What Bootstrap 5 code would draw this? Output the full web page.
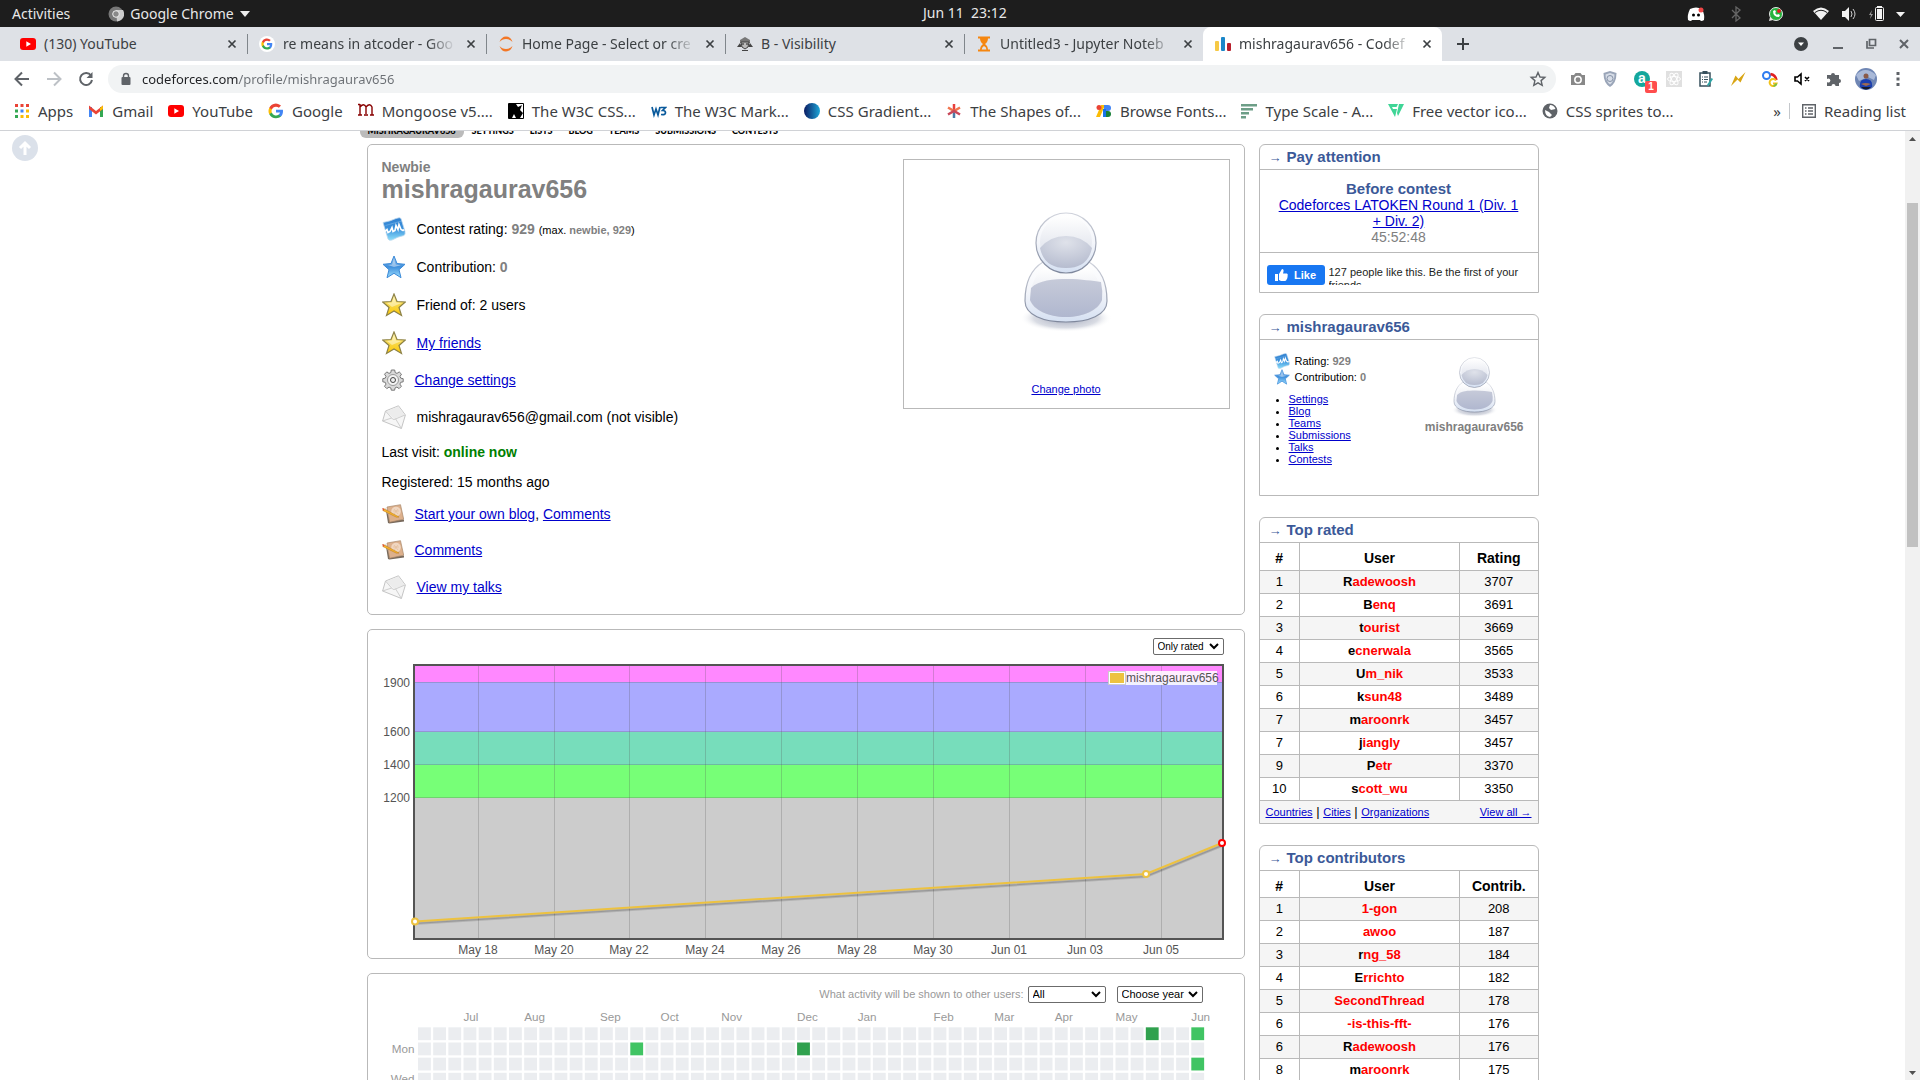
<!DOCTYPE html>
<html lang="en">
<head>
<meta charset="utf-8">
<meta name="viewport" content="width=device-width, initial-scale=1">
<title>mishragaurav656 - Codeforces</title>
<link href="https://cdn.jsdelivr.net/npm/bootstrap@5.3.0/dist/css/bootstrap.min.css" rel="stylesheet">
<style>
:root{--line:#b9b9b9;--cf:#3b5998;--shell:"Noto Sans","Open Sans",sans-serif}
body{height:100vh;overflow:hidden;background:#fff;color:#000;font:14px/16px "Liberation Sans",Arial,sans-serif}
svg{flex-shrink:0}
.page a{color:#0000cc;text-decoration:underline;text-underline-offset:1px}
/* desktop bar */
.desk{height:27px;background:#1d1d1d;color:#e8e8e8;font:14px/26px var(--shell)}
.appname{margin-left:38px;gap:6px}
/* tabs */
.tabstrip{height:34px;background:#dee1e6;color:#3c4043;font:14px/34px var(--shell);padding-left:8px}
.tabitem{width:239px;padding:0 8px 0 12px;gap:8px;position:relative}
.tabitem .ttl{flex:1;min-width:0;overflow:hidden;white-space:nowrap}
.tabitem .fade-end{-webkit-mask-image:linear-gradient(90deg,#000 84%,transparent)}
.tabitem+.tabitem:not(.on)::before{content:"";position:absolute;left:0;top:7px;height:20px;width:1px;background:#80868b}
.tabitem.on{background:#fff;border-radius:8px 8px 0 0}
.plain{border:0;background:none;padding:0;color:inherit;display:inline-flex;align-items:center;justify-content:center}
.xbtn{width:14px;height:14px}
.winbtn{width:33px;height:34px;color:#5f6368}
/* toolbar */
.tools{height:36px;padding:0 6px}
.tool{width:32px;height:28px;color:#5f6368;position:relative}
.omni{height:28px;border-radius:14px;background:#f1f3f4;margin:0 6px;padding:0 9px 0 11px;gap:9px}
.omni input{border:0;outline:0;padding:0;flex:1;min-width:0;font:13px/28px var(--shell);color:transparent;background:linear-gradient(90deg,#202124 97px,#6b6f74 97px);-webkit-background-clip:text;background-clip:text}
.cnt{left:19px;top:16px;width:12px;height:12px;border-radius:2px;background:#ff4d4d;color:#fff;font:bold 10px/12px "Liberation Sans",sans-serif;text-align:center}
.marks{height:34px;padding:0 14px 5px;border-bottom:1px solid #d0d2d6;font:15px/28px var(--shell);color:#3c4043}
.marks a{color:inherit;text-decoration:none;white-space:nowrap;display:flex;align-items:center;gap:8px;margin-right:15px}
.marks a.last-mark{margin:0;padding-left:12px;border-left:1px solid #c4c7cb;height:16px}
/* page */
.bodyview{flex:1;min-height:0;overflow:hidden;position:relative}
.totop{left:12px;top:4px}
.wrapper{width:1172px;max-width:100%}
.submenu{height:7px;margin:0 0 6px -7px;overflow:hidden;font:900 9px/12px Lato,sans-serif}
.submenu a{color:#000;text-decoration:none;padding:0 8px 1px}
.submenu a.cur{background:#bbb;border-radius:0 0 6px 6px}
.cols{gap:14px}
.sidecol{width:280px}
.rbox{border:1px solid var(--line);border-radius:5px;margin-bottom:14px}
.sbox{border:1px solid var(--line);border-radius:6px 6px 0 0;margin-bottom:21px}
.cap{height:25px;padding:0 9px;border-bottom:1px solid var(--line);color:var(--cf);font-weight:bold;font-size:15px;line-height:23px}
.cap span{font-size:13px;font-weight:400;margin-right:5px}
.profile{padding:14px 14px 8px}
.gr{color:gray}
.online{color:#008000}
.handle{font-size:25px;line-height:28px;font-weight:bold}
.facts{margin:7px 0 0;padding:0;list-style:none}
.facts li{display:flex;align-items:center;height:38px;gap:11px}
.facts li.mid{height:36px}
.facts li.visit{height:32px}
.facts li.reg{height:28px}
.tiny{font-size:11px}
.photo{width:327px;height:250px;border:1px solid var(--line);padding:52px 0 11px}
.chartbox{padding:8px 20px 0 15px}
.chartbox svg,.actbox svg{overflow:visible}
.cfsel{appearance:none;border:1px solid #6b6b6b;border-radius:2px;height:17px;padding:0 16px 0 4px;font-size:11px;line-height:15px;color:#000;background:#fff url("data:image/svg+xml,%3Csvg xmlns='http://www.w3.org/2000/svg' width='10' height='7'%3E%3Cpath d='M1 1l4 4 4-4' fill='none' stroke='%23000' stroke-width='2'/%3E%3C/svg%3E") no-repeat right 4px center}
.selrate{font-size:10px;width:71px}
.selwho{width:78px}
.selyear{width:86px}
.actbox{padding:12px 20px 0 15px}
.acthead{height:18px;padding-right:21px}
.selyear{margin-left:11px}
.actlab{color:#999;font-size:11px}
.nextc{padding:11px 16px 7px;line-height:16px}
.nextc b{color:var(--cf);font-size:15px}
.likebar{border-top:1px solid var(--line);padding:12px 7px 7px;gap:4px}
.likebtn{width:58px;height:20px;border-radius:3px;background:#1877f2;color:#fff;font-weight:bold;font-size:11px;gap:5px}
.liketext{font-size:11px;line-height:13px;height:20px;padding-top:1px;overflow:hidden;color:#1c1e21}
.mebox{height:155px;padding:13px 14px 0 14px}
.mebox svg{margin-right:5px}
.me-name{font-size:12px}
.links{margin:8px 0 0;padding-left:15px;font-size:11px;line-height:12px}
.rank{width:100%;border-collapse:collapse;text-align:center;table-layout:fixed}
.rank th{height:27px;font-size:14px;padding:4px 0 0;border-bottom:1px solid var(--line)}
.rank th:first-child{width:40px}
.rank th:last-child{width:78px}
.rank td{height:23px;font-size:13px;line-height:16px;padding:0;border-bottom:1px solid var(--line)}
.rank th+th,.rank td+td{border-left:1px solid var(--line)}
.rank tbody tr:nth-child(odd){background:#f5f5f5}
.rank td b{color:red}
.rank td b i{font-style:normal;color:#000}
.foot{background:#f5f5f5;height:22px;padding:0 6px;font-size:13px}
.foot a{font-size:11px}
.sbar{width:15px;background:#f1f1f1}
.thumb{width:11px;height:344px;background:#c1c1c1;margin-top:57px}
</style>
<script src="https://cdn.jsdelivr.net/npm/bootstrap@5.3.0/dist/js/bootstrap.bundle.min.js"></script>
</head>
<body class="d-flex flex-column">
<svg width="0" height="0" class="position-absolute" aria-hidden="true">
<defs>
<linearGradient id="gBlue" x1="0" y1="0" x2="0" y2="1"><stop offset="0" stop-color="#2f7fd0"/><stop offset=".5" stop-color="#3d93dd"/><stop offset="1" stop-color="#8fe0fa"/></linearGradient>
<linearGradient id="gStarB" x1="0" y1="0" x2="0" y2="1"><stop offset="0" stop-color="#a9cdf0"/><stop offset=".5" stop-color="#3f8fdc"/><stop offset="1" stop-color="#9fe0ff"/></linearGradient>
<linearGradient id="gStarY" x1="0" y1="0" x2="0" y2="1"><stop offset="0" stop-color="#fff3b0"/><stop offset=".5" stop-color="#f7d84a"/><stop offset="1" stop-color="#ffc800"/></linearGradient>
<linearGradient id="gHead" x1="0" y1="0" x2="0" y2="1"><stop offset="0" stop-color="#fff"/><stop offset=".5" stop-color="#f3f5fa"/><stop offset="1" stop-color="#d5e0f2"/></linearGradient>
<linearGradient id="gGlass" x1="0" y1="0" x2="0" y2="1"><stop offset="0" stop-color="#fff"/><stop offset="1" stop-color="#d3d8e5"/></linearGradient>
<radialGradient id="gFace" cx=".5" cy=".2" r=".8"><stop offset="0" stop-color="#dfe2ea"/><stop offset="1" stop-color="#b6bccf"/></radialGradient>
<linearGradient id="gIn" x1="0" y1="0" x2="0" y2="1"><stop offset="0" stop-color="#c6cad9"/><stop offset="1" stop-color="#b0b7cf"/></linearGradient>
<linearGradient id="gEdge" x1="0" y1="0" x2="0" y2="1"><stop offset="0" stop-color="#d0d3dc"/><stop offset="1" stop-color="#7e879c"/></linearGradient>
<linearGradient id="gCss"><stop offset="0" stop-color="#0b1b63"/><stop offset="1" stop-color="#1ea7d8"/></linearGradient>
<radialGradient id="gSh"><stop offset="0" stop-color="#9aa0b4"/><stop offset=".7" stop-color="#c9cdd8" stop-opacity=".7"/><stop offset="1" stop-color="#fff" stop-opacity="0"/></radialGradient>
<symbol id="yt" viewBox="0 0 16 16"><rect y="2" width="16" height="12" rx="3" fill="#f00"/><path d="M6.300 5.200v5.600L11 8z" fill="#fff"/></symbol>
<symbol id="goog" viewBox="0 0 16 16"><path d="M15 8.200c0-.6 0-1-.1-1.400H8v2.700h4a3.500 3.500 0 0 1-1.500 2.200v1.900h2.500c1.300-1.300 2-3.200 2-5.400z" fill="#4285f4"/><path d="M8 15.300c2 0 3.700-.7 5-1.700l-2.500-1.900a4.500 4.500 0 0 1-6.700-2.300H1.300v1.900A7.400 7.400 0 0 0 8 15.300z" fill="#34a853"/><path d="M3.800 9.400a4.400 4.400 0 0 1 0-2.800V4.700H1.300a7.400 7.400 0 0 0 0 6.600z" fill="#fbbc05"/><path d="M8 3.700c1.100 0 2.100.4 2.900 1.100L13 2.600A7.400 7.400 0 0 0 1.300 4.700l2.500 1.900A4.500 4.500 0 0 1 8 3.700z" fill="#ea4335"/></symbol>
<symbol id="x" viewBox="0 0 14 14"><path d="M3.500 3.500l7 7m0-7l-7 7" stroke="#3c4043" stroke-width="1.700"/></symbol>
<symbol id="chart" viewBox="0 0 24 24"><path d="M1 5.500Q9 4 14 1.500q4-1.500 5 0l4 13q.6 3-1 4-6 1-12 4.500-3 1-4-1z" fill="url(#gBlue)" stroke="#bcd8ee" stroke-width=".8"/><path d="M3 14.500l2-2 1 3 2-1 2-4 1 4 2-1 1-5 2 4 1-5 2 5 2 1 1-1" fill="none" stroke="#fff" stroke-width="1.600"/><path d="M3.500 8.500l16-4.500" stroke="#7bb7e8" stroke-width=".6"/></symbol>
<symbol id="starB" viewBox="0 0 24 24"><path d="M12 1l3 7.500 8 .8-6 5.400 2 8-7-4.400-7 4.400 2-8-6-5.400 8-.8z" fill="url(#gStarB)" stroke="#3b8ad8" stroke-width="1"/><path d="M12 4l1.800 5.500 5 .7L12 12l-6-2 4-.6z" fill="#c9def3" opacity=".6"/></symbol>
<symbol id="starY" viewBox="0 0 24 24"><path d="M12 1l3 7.500 8.300.5-6.300 5.500 2.500 8L12 18l-7.500 4.500 2.500-8L.7 9 9 8.500z" fill="url(#gStarY)" stroke="#8d8247" stroke-width="1.200"/><path d="M12 3.500l2 6 5.500.5L10 14l-5-4 5-.5z" fill="#fffadb" opacity=".55"/></symbol>
<symbol id="gear" viewBox="0 0 22 22"><g fill="#d9d9d9" stroke="#777"><path d="M9.300 1h3.400l.5 2.600 1.800.8 2.200-1.500 2.300 2.300L18 7.400l.8 1.800 2.400.5v3.100l-2.500.5-.8 1.800 1.500 2.200-2.300 2.300-2.200-1.500-1.800.8-.5 2.300H9.300l-.5-2.300-1.800-.8-2.200 1.500-2.300-2.300L4 15.100l-.8-1.800L.8 12.800V9.700l2.400-.5L4 7.400 2.500 5.200l2.300-2.300L7 4.400l1.800-.8z"/><circle cx="11" cy="11" r="5.500" fill="#f3f3f3" stroke="#999"/><circle cx="11" cy="11" r="2.500" fill="#eee" stroke="#444"/></g></symbol>
<symbol id="mail" viewBox="0 0 24 24"><path d="M3.500 6L16.500 .8 23.400 10l-4 13.500L.6 16z" fill="#f6f6f6" stroke="#bdbdbd" stroke-width=".9"/><path d="M4 6.500L16.300 1.500 23 10l-11 3.500z" fill="#ececec"/><path d="M3.500 6l7 8q1.500 1 3 0L23 10M.6 16l9-3m9.800 10.500l-6-10" fill="none" stroke="#c9c9c9" stroke-width=".9"/></symbol>
<symbol id="blog" viewBox="0 0 22 20"><path d="M3.500 3.500L6 19l1.500.5L22 17.500v-2L8 16z" fill="#77695c"/><path d="M5 3L18.500.7l3.200 14.500L7.500 18.300z" fill="#ddb08c" stroke="#a88768" stroke-width=".7"/><circle cx="14" cy="7.500" r="4.800" fill="#f6e3d2" opacity=".75"/><path d="M12 5l4 5m0-5l-4 5m-1-3h6" stroke="#e2bd9c" stroke-width=".7"/><path d="M1.500 4.500L17 13l-2.500.2L.8 6.500z" fill="#f9b42d" stroke="#b87a16" stroke-width=".5"/><path d="M0 4l2.500 1L1.500 7z" fill="#e0503a"/></symbol>
<symbol id="person" viewBox="0 0 100 124"><ellipse cx="50" cy="106" rx="46" ry="14" fill="url(#gSh)"/><path d="M27 50C14 58 9 73 9 89c0 14 18 21 41 21s41-7 41-21c0-16-5-31-18-39z" fill="url(#gHead)" stroke="url(#gEdge)" stroke-width="1.200"/><path d="M28 56C19 62 15 73 14 88c2 9 17 17 36 17s34-8 36-17c-1-15-5-26-14-32z" fill="url(#gGlass)"/><path d="M15 76c8-8 22-9 37-9 13 0 25 2 33 3q2 9 1 18c-4 10-18 17-36 17s-32-7-36-17z" fill="url(#gIn)"/><circle cx="50" cy="31" r="30" fill="url(#gHead)" stroke="url(#gEdge)" stroke-width="1.200"/><circle cx="50" cy="30" r="26" fill="url(#gGlass)"/><path d="M24 36Q34 24 50 24t26 12q-4 20-26 20T24 36z" fill="url(#gFace)"/></symbol>
</defs></svg>

<header class="desk d-flex px-2">
  <div class="flex-fill d-flex align-items-center col"><span class="ms-1">Activities</span>
    <span class="appname d-flex align-items-center"><svg width="16" height="16" viewBox="0 0 16 16"><circle cx="8" cy="8" r="7.500" fill="#777"/><path d="M8 4h7a7.500 7.500 0 0 1-6 11.500z" fill="#ccc"/><circle cx="8" cy="8" r="3.300" fill="#888" stroke="#eee"/></svg>Google Chrome<svg width="10" height="6"><path d="M0 0h10L5 6z" fill="#eee"/></svg></span></div>
  <div>Jun 11&nbsp; 23:12</div>
  <div class="flex-fill col d-flex align-items-center justify-content-end">
    <svg width="232" height="24" viewBox="1680 1 232 24"><path d="M1690 8q6-3 12 0 3 6 2 11-3 2-4 0h-8q-1 2-4 0-1-5 2-11z" fill="#fff"/><circle cx="1693.500" cy="14" r="1.500"/><circle cx="1698.500" cy="14" r="1.500"/><circle cx="1701" cy="9" r="2.500" fill="#f04747"/><path d="M1732 9l8 8-4 3V6l4 3-8 8" fill="none" stroke="#666" stroke-width="1.300"/><circle cx="1776" cy="13" r="6.500" fill="#25b33e" stroke="#e8e8e8"/><path d="M1769 20l1-4 3 3z" fill="#e8e8e8"/><path d="M1773 10q0 6 6 6l1-2-2-1-1 1-2-2 1-1-1-2z" fill="#fff"/><circle cx="1779" cy="10" r="2" fill="#e01b24"/><path d="M1813 10q8-7 16 0l-8 9z" fill="#f2f2f2"/><path d="M1815 11.500q6-4.500 12 0" stroke="#1d1d1d" fill="none"/><path d="M1842 10h3l4-4v14l-4-4h-3z" fill="#f2f2f2"/><path d="M1851 10q2 3 0 6m2-8q4 5 0 10" fill="none" stroke="#ccc"/><path d="M1872 9l-3 5h2l-1 4 3-5h-2z" fill="#999"/><rect x="1875.500" y="6.500" width="8" height="13" rx="1" fill="none" stroke="#f2f2f2"/><path d="M1877 8h5v10h-5zM1877 5h5v1h-5z" fill="#f2f2f2"/><path d="M1896 11h9l-4.500 5z" fill="#f2f2f2"/></svg>
  </div>
</header>

<nav class="tabstrip d-flex" aria-label="Tabs">
  <div class="tabitem d-flex align-items-center"><svg width="16" height="16"><use href="#yt"/></svg><span class="ttl">(130) YouTube</span><button class="plain xbtn" aria-label="Close"><svg width="14" height="14"><use href="#x"/></svg></button></div>
  <div class="tabitem d-flex align-items-center"><svg width="16" height="16" viewBox="0 0 16 16"><circle cx="8" cy="8" r="8" fill="#fff"/><use href="#goog" x="2" y="2" width="12" height="12"/></svg><span class="ttl fade-end">re means in atcoder - Goo</span><button class="plain xbtn" aria-label="Close"><svg width="14" height="14"><use href="#x"/></svg></button></div>
  <div class="tabitem d-flex align-items-center"><svg width="16" height="16" viewBox="0 0 16 16"><path d="M1.500 6q2-5.500 6.500-5.500T14.500 6Q12 3 8 3T1.500 6zM1.500 10q2 5.500 6.500 5.500T14.500 10Q12 13 8 13T1.500 10z" fill="#f37726"/></svg><span class="ttl fade-end">Home Page - Select or cre</span><button class="plain xbtn" aria-label="Close"><svg width="14" height="14"><use href="#x"/></svg></button></div>
  <div class="tabitem d-flex align-items-center"><svg width="16" height="16" viewBox="0 0 16 16"><path d="M3 4l5-3 5 3v3H3z" fill="#777"/><path d="M4 6h8l-1 5-3 2-3-2z" fill="#bbb" stroke="#444"/><path d="M0 11l3-4 2 4zm16 0l-3-4-2 4zM5 14h6v1H5z" fill="#444"/><path d="M5 8h2m2 0h2" stroke="#222"/></svg><span class="ttl">B - Visibility</span><button class="plain xbtn" aria-label="Close"><svg width="14" height="14"><use href="#x"/></svg></button></div>
  <div class="tabitem d-flex align-items-center"><svg width="16" height="16" viewBox="0 0 16 16"><path d="M2 .5h12v2H2zM2 13.500h12v2H2zM4 2h8q0 4-3 6 3 2 3 6h-1.500q0-3-2.500-4-2 1-2.500 4H4q0-4 3-6-3-2-3-6z" fill="#f5860f"/></svg><span class="ttl fade-end">Untitled3 - Jupyter Noteb</span><button class="plain xbtn" aria-label="Close"><svg width="14" height="14"><use href="#x"/></svg></button></div>
  <div class="tabitem on d-flex align-items-center"><svg width="16" height="16" viewBox="0 0 16 16"><rect y="5" width="4" height="10" rx="1" fill="#f6c945"/><rect x="6" y="1" width="4" height="14" rx="1" fill="#1b87c9"/><rect x="12" y="7" width="4" height="8" rx="1" fill="#b8202d"/></svg><span class="ttl fade-end">mishragaurav656 - Codef</span><button class="plain xbtn" aria-label="Close"><svg width="14" height="14"><use href="#x"/></svg></button></div>
  <button class="plain winbtn ms-1" aria-label="New tab"><svg width="14" height="14"><path d="M7 1v12M1 7h12" stroke="#3c4043" stroke-width="2"/></svg></button>
  <div class="ms-auto d-flex">
    <button class="plain winbtn me-1" aria-label="Search tabs"><svg width="14" height="14"><circle cx="7" cy="7" r="7" fill="#3c4043"/><path d="M4 5.500h6L7 9z" fill="#fff"/></svg></button>
    <button class="plain winbtn" aria-label="Minimize"><svg width="12" height="12"><path d="M1 10h10" stroke="#5f6368" stroke-width="2"/></svg></button>
    <button class="plain winbtn" aria-label="Restore"><svg width="12" height="12"><path d="M4.500 1.500h6v6h-6zM2 3v7h7" fill="none" stroke="#5f6368" stroke-width="1.700"/></svg></button>
    <button class="plain winbtn" aria-label="Close window"><svg width="12" height="12"><path d="M2 2l8 8m0-8l-8 8" stroke="#5f6368" stroke-width="2"/></svg></button>
  </div>
</nav>

<div class="tools d-flex align-items-center">
  <button class="plain tool" aria-label="Back"><svg width="16" height="16"><path d="M15 8H2m6-6.500L1.500 8 8 14.500" fill="none" stroke="#5f6368" stroke-width="2"/></svg></button>
  <button class="plain tool" aria-label="Forward"><svg width="16" height="16"><path d="M1 8h13M8 1.500L14.500 8 8 14.500" fill="none" stroke="#bdc1c6" stroke-width="2"/></svg></button>
  <button class="plain tool" aria-label="Reload"><svg width="16" height="16"><path d="M13 4.500A6 6 0 1 0 14 9" fill="none" stroke="#5f6368" stroke-width="2"/><path d="M14.500 1v6h-6z" fill="#5f6368"/></svg></button>
  <form class="omni d-flex align-items-center flex-fill">
    <svg width="14" height="14" viewBox="0 0 14 14"><rect x="2.500" y="5" width="9" height="8" rx="1" fill="#5f6368"/><path d="M4.500 6V4a2.500 2.500 0 0 1 5 0v2" fill="none" stroke="#5f6368" stroke-width="1.400"/></svg>
    <input type="text" aria-label="Address" value="codeforces.com/profile/mishragaurav656">
    <button type="button" class="plain" aria-label="Bookmark"><svg width="18" height="18"><path d="M9 2.500l2 4.500 4.800.4-3.700 3.200 1.100 4.700L9 12.800l-4.200 2.500 1.100-4.700L2.200 7.400 7 7z" fill="none" stroke="#5f6368" stroke-width="1.400"/></svg></button>
  </form>
  <button class="plain tool" aria-label="Camera"><svg width="16" height="16"><path d="M1 4h3l1.500-2h5L12 4h3v10H1z" fill="#888"/><circle cx="8" cy="8.700" r="3.200" fill="#888" stroke="#fff" stroke-width="1.500"/></svg></button>
  <button class="plain tool" aria-label="Shield"><svg width="16" height="16"><path d="M8 0l6.500 2q0 10-6.500 14Q1.500 12 1.500 2z" fill="#9aa5b8"/><path d="M8 2l4.500 1.500Q12.500 10 8 13.500 3.500 10 3.500 3.500z" fill="#d6dce6"/><circle cx="8" cy="7.500" r="3" fill="none" stroke="#8793a8"/></svg></button>
  <button class="plain tool" aria-label="Extension"><svg width="16" height="16"><circle cx="8" cy="8" r="8" fill="#14a79c"/><text x="8" y="12" text-anchor="middle" font-size="14" font-weight="bold" fill="#fff">a</text></svg><span class="cnt position-absolute">1</span></button>
  <button class="plain tool" aria-label="React"><svg width="16" height="16"><rect width="16" height="16" fill="#e0e0e0"/><g fill="none" stroke="#fff"><ellipse cx="8" cy="8" rx="6.500" ry="2.500"/><ellipse cx="8" cy="8" rx="6.500" ry="2.500" transform="rotate(60 8 8)"/><ellipse cx="8" cy="8" rx="6.500" ry="2.500" transform="rotate(120 8 8)"/></g></svg></button>
  <button class="plain tool" aria-label="Clipboard"><svg width="16" height="16"><path d="M2 2h10v13H2z" fill="#fff" stroke="#37505c" stroke-width="1.500"/><path d="M4.500 0h5v3h-5z" fill="#37505c"/><path d="M4 6h1m1 0h4M4 8.500h1m1 0h4M4 11h1m1 0h3" stroke="#37505c"/><path d="M9 14l4.500-7L15 8l-4.500 7z" fill="#2ba5a5"/></svg></button>
  <button class="plain tool" aria-label="Bolt"><svg width="16" height="16"><path d="M1 15L5.500 4.500 8.500 8 15.500 1 10.500 11.500 7.500 8.500z" fill="#d9a514"/></svg></button>
  <button class="plain tool" aria-label="Translate"><svg width="16" height="16"><circle cx="4.500" cy="4.500" r="3.500" fill="none" stroke="#2f7cf0" stroke-width="2"/><path d="M8.500 3q5 1 6 6" fill="none" stroke="#e02020" stroke-width="2.500"/><path d="M14 9.500a3.500 3.500 0 1 0 .5 3H11" fill="none" stroke="#f2c21a" stroke-width="2"/><path d="M14.500 12.500a3.500 3.500 0 0 1-3 2.500" fill="none" stroke="#7ac143" stroke-width="2"/></svg></button>
  <button class="plain tool" aria-label="Mute"><svg width="16" height="16"><path d="M1 6h2.500l3.500-3v10l-3.500-3H1zM11 6l4 4m0-4l-4 4" fill="none" stroke="#000" stroke-width="1.600"/></svg></button>
  <button class="plain tool" aria-label="Extensions"><svg width="16" height="16"><path d="M1 4h4a2 2 0 1 1 4 0h4v4a2 2 0 1 1 0 4v3H9.500a2 2 0 1 0-4 0H1v-4a2 2 0 1 0 0-3z" fill="#5f6368"/></svg></button>
  <button class="plain tool" aria-label="Account"><svg width="22" height="22"><circle cx="11" cy="11" r="11" fill="#6f86b4"/><path d="M1 7q9-10 20 0l-2 5-6-3-9 4z" fill="#a9b9d8"/><circle cx="11" cy="8" r="2.500" fill="#8a5a48"/><path d="M5 19q-1-8 6-8t6 8q-6 5-12 0z" fill="#1b3fb0"/><path d="M6 16q4-2 10 0l-5 2z" fill="#a06a50"/><path d="M6 19h10q-5 5-10 0z" fill="#161a2c"/></svg></button>
  <button class="plain tool" aria-label="Menu"><svg width="4" height="14"><path d="M.5 0h3v3h-3zM.5 5.500h3v3h-3zM.5 11h3v3h-3z" fill="#5f6368"/></svg></button>
</div>

<nav class="marks d-flex align-items-center" aria-label="Bookmarks">
  <a href="#"><svg width="16" height="16"><path d="M1 1h3v3H1zM6.500 1h3v3h-3zM12 1h3v3h-3z" fill="#ea4335"/><path d="M1 6.500h3v3H1z" fill="#34a853"/><path d="M6.500 6.500h3v3h-3z" fill="#4285f4"/><path d="M12 6.500h3v3h-3zM6.500 12h3v3h-3zM12 12h3v3h-3z" fill="#fbbc05"/><path d="M1 12h3v3H1z" fill="#34a853"/></svg>Apps</a>
  <a href="#"><svg width="16" height="16"><path d="M1 4h3v10H1z" fill="#4285f4"/><path d="M12 4h3v10h-3z" fill="#34a853"/><path d="M1 2.500L8 8l7-5.500V6l-7 5.500L1 6z" fill="#ea4335"/><path d="M12 5l3-2.500V6l-3 2z" fill="#fbbc05"/></svg>Gmail</a>
  <a href="#"><svg width="16" height="16"><use href="#yt"/></svg>YouTube</a>
  <a href="#"><svg width="16" height="16"><use href="#goog"/></svg>Google</a>
  <a href="#"><svg width="16" height="16"><path d="M2 12V1M2 4q4-4.500 6 0v7M8 4q4-4.500 6 0v8M0 1.500h2M0 12h4M6 12h4M12 12h4" fill="none" stroke="#880000" stroke-width="1.400"/></svg>Mongoose v5....</a>
  <a href="#"><svg width="16" height="16"><path d="M.5.500h15v15H.5z" fill="#fff" stroke="#000"/><path d="M1 1h7l2 3 4-2-2 5 3 3-3 5H8L6 11l-2 4H1z"/></svg>The W3C CSS...</a>
  <a href="#"><svg width="16" height="16"><path d="M1 4l2 8 2-6 2 6 2-8M9.500 4.500h5l-3 3q3 0 3 2.300t-4.500 1.700" fill="none" stroke="#0a5a9c" stroke-width="1.700"/></svg>The W3C Mark...</a>
  <a href="#"><svg width="16" height="16"><circle cx="8" cy="8" r="8" fill="url(#gCss)"/></svg>CSS Gradient...</a>
  <a href="#"><svg width="16" height="16"><g stroke-width="2.500"><path d="M8 1v7" stroke="#e8413c"/><path d="M8 8v7" stroke="#4a7ba6"/><path d="M2 4.500L8 8l6-3.500" stroke="#f1754e" fill="none"/><path d="M2 11.500L8 8l6 3.500" stroke="#c8485a" fill="none"/></g></svg>The Shapes of...</a>
  <a href="#"><svg width="16" height="16"><path d="M5 2h4L4 14H0z" fill="#fbbc05"/><circle cx="3" cy="4.500" r="2.500" fill="#ea4335"/><path d="M8 2h4a3 3 0 0 1 0 6H8z" fill="#4285f4"/><path d="M8 8h4a3 3 0 0 1 0 6H8z" fill="#188038"/><path d="M7 6h3v8H7z" fill="#1a73e8"/></svg>Browse Fonts...</a>
  <a href="#"><svg width="16" height="16"><path d="M0 1h16v2.500H0zM0 5h12v2.500H0zM0 9h8v2.500H0zM0 13h5v2.500H0z" fill="#6d9e87"/></svg>Type Scale - A...</a>
  <a href="#"><svg width="16" height="16"><path d="M0 1h10L8.500 4H4l1 2h4L7 14zM11 1h5l-6 12-1-3z" fill="#3fd596"/></svg>Free vector ico...</a>
  <a href="#"><svg width="16" height="16"><circle cx="8" cy="8" r="7.500" fill="#5f6368"/><path d="M8 2q4 0 5.500 4L9 7 7 5zM3 7l4 2 3 3-2 2Q3 13 3 7z" fill="#fff"/></svg>CSS sprites to...</a>
  <span class="ms-auto me-2">»</span>
  <a href="#" class="last-mark"><svg width="14" height="14"><path d="M.7.700h12.600v12.600H.7zM3 4h1.500m1.500 0h5M3 7h1.500M6 7h5m-8 3h1.500M6 10h5" fill="none" stroke="#5f6368" stroke-width="1.400"/></svg>Reading list</a>
</nav>

<div class="bodyview d-flex page">
<div class="col position-relative">
<a href="#" class="totop position-absolute" aria-label="To top"><svg width="26" height="26"><circle cx="13" cy="13" r="13" fill="#dbe1ea"/><path d="M13 20V8m-5 5l5-5 5 5" fill="none" stroke="#fff" stroke-width="3"/></svg></a>
<div class="wrapper mx-auto">
  <div class="submenu d-flex align-items-end"><a class="cur" href="#">MISHRAGAURAV656</a><a href="#">SETTINGS</a><a href="#">LISTS</a><a href="#">BLOG</a><a href="#">TEAMS</a><a href="#">SUBMISSIONS</a><a href="#">CONTESTS</a></div>
  <div class="cols d-flex align-items-start">
  <main class="col">
    <section class="rbox profile d-flex justify-content-between">
      <div>
        <div class="gr fw-bold">Newbie</div>
        <div class="handle gr">mishragaurav656</div>
        <ul class="facts">
          <li><svg width="24" height="24"><use href="#chart"/></svg><span>Contest rating: <b class="gr">929</b> <span class="tiny">(max. <b class="gr">newbie, 929</b>)</span></span></li>
          <li><svg width="24" height="24"><use href="#starB"/></svg><span>Contribution: <b class="gr">0</b></span></li>
          <li><svg width="24" height="24"><use href="#starY"/></svg><span>Friend of: 2 users</span></li>
          <li><svg width="24" height="24"><use href="#starY"/></svg><a href="#">My friends</a></li>
          <li class="mid"><svg width="22" height="22"><use href="#gear"/></svg><a href="#">Change settings</a></li>
          <li><svg width="24" height="24"><use href="#mail"/></svg><span>mishragaurav656@gmail.com (not visible)</span></li>
          <li class="visit"><span>Last visit: <b class="online">online now</b></span></li>
          <li class="reg">Registered: 15 months ago</li>
          <li class="mid"><svg width="22" height="20"><use href="#blog"/></svg><span><a href="#">Start your own blog</a>, <a href="#">Comments</a></span></li>
          <li class="mid"><svg width="22" height="20"><use href="#blog"/></svg><a href="#">Comments</a></li>
          <li><svg width="24" height="24"><use href="#mail"/></svg><a href="#">View my talks</a></li>
        </ul>
      </div>
      <div class="photo d-flex flex-column align-items-center justify-content-between">
        <svg width="100" height="124"><use href="#person"/></svg>
        <a href="#" class="tiny">Change photo</a>
      </div>
    </section>

    <section class="rbox chartbox">
      <div class="text-end lh-1"><select class="cfsel selrate align-top" aria-label="Rating filter"><option>Only rated</option></select></div>
      <svg id="ratingPlot" class="d-block" width="100%" viewBox="383 655 841 303" font-size="12" fill="#545454"></svg>
    </section>

    <section class="rbox actbox">
      <div class="acthead d-flex justify-content-end align-items-start">
        <label class="actlab me-1" for="who">What activity will be shown to other users:</label>
        <select id="who" class="cfsel selwho"><option>All</option></select>
        <select class="cfsel selyear" aria-label="Year"><option>Choose year</option></select>
      </div>
      <svg id="heat" class="d-block" width="100%" viewBox="0 0 721 110" font-size="10" fill="#999"></svg>
    </section>
  </main>

  <aside class="sidecol flex-shrink-0">
    <section class="sbox"><div class="cap"><span>→</span>Pay attention</div>
      <div class="nextc text-center"><b>Before contest</b><br><a href="#">Codeforces LATOKEN Round 1 (Div. 1 + Div. 2)</a><br><span class="gr">45:52:48</span></div>
      <div class="likebar d-flex">
        <button class="plain likebtn flex-shrink-0"><svg width="14" height="14"><path d="M0 6h3v7H0zM4 6l3-5q2 0 1.500 2.500L8 5.500h4q1.500 1 .5 2.500.5 1-.3 2 .2 1-.7 1.600 0 1.400-1.500 1.400H6l-2-1z" fill="#fff"/></svg>Like</button>
        <div class="liketext">127 people like this. Be the first of your friends.</div>
      </div>
    </section>

    <section class="sbox"><div class="cap"><span>→</span>mishragaurav656</div>
      <div class="mebox d-flex justify-content-between">
        <div class="tiny">
          <div class="d-flex align-items-center"><svg width="16" height="16"><use href="#chart"/></svg><span>Rating: <b class="gr">929</b></span></div>
          <div class="d-flex align-items-center"><svg width="16" height="16"><use href="#starB"/></svg><span>Contribution: <b class="gr">0</b></span></div>
          <ul class="links"><li><a href="#">Settings</a></li><li><a href="#">Blog</a></li><li><a href="#">Teams</a></li><li><a href="#">Submissions</a></li><li><a href="#">Talks</a></li><li><a href="#">Contests</a></li></ul>
        </div>
        <div class="text-center"><svg class="d-block mx-auto mt-1" width="53" height="62"><use href="#person"/></svg><b class="me-name gr d-block">mishragaurav656</b></div>
      </div>
    </section>

    <section class="sbox"><div class="cap"><span>→</span>Top rated</div>
      <table class="rank">
      <thead><tr><th>#</th><th>User</th><th>Rating</th></tr></thead>
      <tbody>
      <tr><td>1</td><td><b><i>R</i>adewoosh</b></td><td>3707</td></tr>
      <tr><td>2</td><td><b><i>B</i>enq</b></td><td>3691</td></tr>
      <tr><td>3</td><td><b><i>t</i>ourist</b></td><td>3669</td></tr>
      <tr><td>4</td><td><b><i>e</i>cnerwala</b></td><td>3565</td></tr>
      <tr><td>5</td><td><b><i>U</i>m_nik</b></td><td>3533</td></tr>
      <tr><td>6</td><td><b><i>k</i>sun48</b></td><td>3489</td></tr>
      <tr><td>7</td><td><b><i>m</i>aroonrk</b></td><td>3457</td></tr>
      <tr><td>7</td><td><b><i>j</i>iangly</b></td><td>3457</td></tr>
      <tr><td>9</td><td><b><i>P</i>etr</b></td><td>3370</td></tr>
      <tr><td>10</td><td><b><i>s</i>cott_wu</b></td><td>3350</td></tr>
      </tbody></table>
      <div class="foot d-flex justify-content-between align-items-center"><span><a href="#">Countries</a> | <a href="#">Cities</a> | <a href="#">Organizations</a></span><a href="#">View all →</a></div>
    </section>

    <section class="sbox"><div class="cap"><span>→</span>Top contributors</div>
      <table class="rank">
      <thead><tr><th>#</th><th>User</th><th>Contrib.</th></tr></thead>
      <tbody>
      <tr><td>1</td><td><b>1-gon</b></td><td>208</td></tr>
      <tr><td>2</td><td><b>awoo</b></td><td>187</td></tr>
      <tr><td>3</td><td><b><i>r</i>ng_58</b></td><td>184</td></tr>
      <tr><td>4</td><td><b><i>E</i>rrichto</b></td><td>182</td></tr>
      <tr><td>5</td><td><b>SecondThread</b></td><td>178</td></tr>
      <tr><td>6</td><td><b>-is-this-fft-</b></td><td>176</td></tr>
      <tr><td>6</td><td><b><i>R</i>adewoosh</b></td><td>176</td></tr>
      <tr><td>8</td><td><b><i>m</i>aroonrk</b></td><td>175</td></tr>
      </tbody></table>
    </section>
  </aside>
  </div>
</div>
</div>
<div class="sbar flex-shrink-0 d-flex flex-column align-items-center justify-content-between">
  <svg width="15" height="15"><path d="M4 10h7L7.500 6z" fill="#505050"/></svg>
  <div class="thumb mb-auto"></div>
  <svg width="15" height="15"><path d="M4 6h7l-3.500 4z" fill="#505050"/></svg>
</div>
</div>
<script>
// rating plot: coloured rating bands, grid, line and markers
const bands=[[665,682,'#ff88ff'],[682,732,'#aaaaff'],[732,765,'#77ddbb'],[765,798,'#77ff77'],[798,939,'#cccccc']];
let s=bands.map(b=>`<rect x="414" y="${b[0]}" width="809" height="${b[1]-b[0]}" fill="${b[2]}"/>`).join('');
[[682,1900],[731,1600],[764,1400],[797,1200]].forEach(r=>s+=`<rect x="415" y="${r[0]}" width="807" height="1" fill="#545454" opacity=".25"/><text x="410" y="${r[0]+5}" text-anchor="end">${r[1]}</text>`);
[['May 18',478],['May 20',554],['May 22',629],['May 24',705],['May 26',781],['May 28',857],['May 30',933],['Jun 01',1009],['Jun 03',1085],['Jun 05',1161]].forEach(d=>s+=`<rect x="${d[1]}" y="666" width="1" height="272" fill="#545454" opacity=".25"/><text x="${d[1]}" y="954" text-anchor="middle">${d[0]}</text>`);
s+=`<rect x="414" y="665" width="809" height="274" fill="none" stroke="#545454" stroke-width="2"/>
<rect x="1108" y="671" width="109" height="14" fill="#fff" opacity=".85"/><rect x="1108.500" y="671.500" width="17" height="13" fill="#fff" stroke="#ccc"/><rect x="1110" y="673" width="14" height="10" fill="#edc240"/><text x="1126" y="682">mishragaurav656</text>
<g fill="none" stroke-width="2"><path d="M415 924L1146 877l76-31" stroke="#000" opacity=".13"/><path d="M415 923L1146 876l76-31" stroke="#000" opacity=".15"/><path d="M415 921.500L1146 874l76-31" stroke="#edc240"/></g>
<g fill="#fff" stroke="#edc240" stroke-width="2"><circle cx="415" cy="921.500" r="3"/><circle cx="1146" cy="874" r="3"/><circle cx="1222" cy="843" r="3" stroke="red"/></g>`;
document.getElementById('ratingPlot').innerHTML=s;
// activity calendar: 52 weeks by 7 days
const hot={'14,1':'#40c463','25,1':'#30a14e','48,0':'#30a14e','51,0':'#40c463','51,2':'#40c463'};
let h='';
[['Jul',3],['Aug',7],['Sep',12],['Oct',16],['Nov',20],['Dec',25],['Jan',29],['Feb',34],['Mar',38],['Apr',42],['May',46],['Jun',51]].forEach(m=>h+=`<text x="${30+13*m[1]}" y="15">${m[0]}</text>`);
[['Mon',42],['Wed',68],['Fri',94]].forEach(d=>h+=`<text x="27" y="${d[1]}" text-anchor="end">${d[0]}</text>`);
for(let c=0;c<52;c++)for(let r=0;r<7;r++)h+=`<rect x="${30+13*c}" y="${20+13*r}" width="11" height="11" fill="${hot[c+','+r]||'#ebedf0'}"/>`;
document.getElementById('heat').innerHTML=h;
</script>
</body>
</html>
